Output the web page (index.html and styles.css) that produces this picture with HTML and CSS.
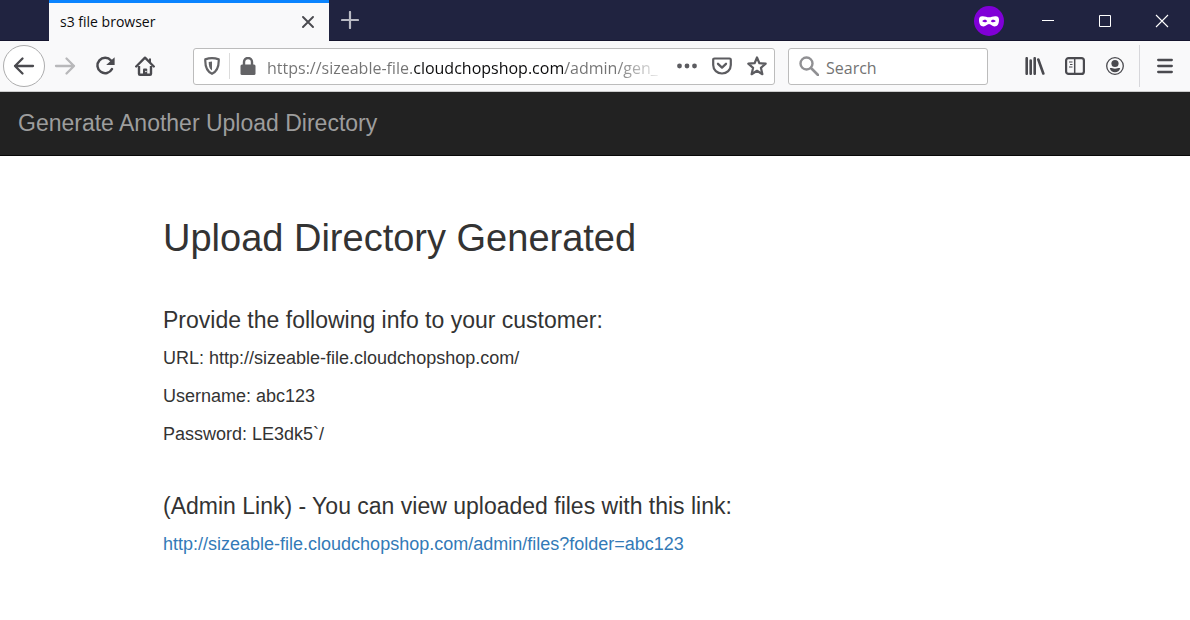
FILE: index.html
```html
<!DOCTYPE html>
<html lang="en">
<head>
<meta charset="utf-8">
<meta name="viewport" content="width=device-width, initial-scale=1">
<title>s3 file browser</title>
<link rel="stylesheet" href="styles.css">
</head>
<body>
<div class="tabstrip">
  <div class="tab">
    <span class="tab-title">s3 file browser</span>
    <button class="icon-btn tab-close" aria-label="Close tab"><svg width="12" height="12" viewBox="0 0 12 12"><path d="M1 1l10 10M11 1L1 11" stroke="#4a4a4f" stroke-width="1.9" stroke-linecap="round"/></svg></button>
  </div>
  <button class="icon-btn new-tab" aria-label="New tab"><svg width="18" height="18" viewBox="0 0 18 18"><path d="M9 1v16M1 9h16" stroke="#b9bac4" stroke-width="2.200" stroke-linecap="round"/></svg></button>
  <div class="window-controls">
    <svg class="private-badge" width="30" height="30" viewBox="0 0 30 30" role="img" aria-label="Private browsing"><circle cx="15" cy="15" r="15" fill="#8000d7"/><path fill="#fff" fill-rule="evenodd" d="M8.2 10.2C10.5 9.9 13 11.3 15 11.3s4.500-1.400 6.800-1.100C24.200 10.300 25 11.800 25 13.800 25 18 23.500 20.500 20.500 20.500c-2.500 0-3.300-2.400-5.500-2.400s-3 2.400-5.500 2.400C6.500 20.500 5 18 5 13.800c0-2 .800-3.500 3.200-3.600zM11 13.800c-1.300 0-2.200.6-2.700 1.400.8.700 1.600 1.100 2.700 1.100s1.800-.5 2.200-1c-.4-.9-1.100-1.500-2.200-1.500zm8 0c-1.100 0-1.800.6-2.200 1.500.4.500 1.100 1 2.200 1s1.900-.4 2.700-1.100c-.5-.8-1.400-1.400-2.700-1.400z"/></svg>
    <button class="icon-btn window-btn" aria-label="Minimize"><svg width="12" height="12" viewBox="0 0 12 12"><path d="M0 5.500h12" stroke="#fff"/></svg></button>
    <button class="icon-btn window-btn" aria-label="Maximize"><svg width="12" height="12" viewBox="0 0 12 12"><path d="M.5.500h11v11H.500z" fill="none" stroke="#fff"/></svg></button>
    <button class="icon-btn window-btn" aria-label="Close"><svg width="14" height="14" viewBox="0 0 14 14"><path d="M1 1l12 12M13 1L1 13" stroke="#fff" stroke-width="1.100"/></svg></button>
  </div>
</div>

<div class="toolbar">
  <div class="nav-buttons">
    <button class="icon-btn back" aria-label="Back"><svg width="22" height="20" viewBox="0 0 22 20"><path d="M20 10H2M9.500 2.500L2 10l7.500 7.500" fill="none" stroke="#4a4a4f" stroke-width="2.300" stroke-linecap="round" stroke-linejoin="round"/></svg></button>
    <button class="icon-btn tool" aria-label="Forward" disabled><svg width="22" height="20" viewBox="0 0 22 20"><path d="M2 10h18M12.500 2.500L20 10l-7.500 7.500" fill="none" stroke="#b8b8ba" stroke-width="2.300" stroke-linecap="round" stroke-linejoin="round"/></svg></button>
    <button class="icon-btn tool" aria-label="Reload"><svg width="20" height="20" viewBox="0 0 20 20"><path d="M16 4.500A7.700 7.700 0 1 0 17 13" fill="none" stroke="#4a4a4f" stroke-width="2.500" stroke-linecap="round"/><path d="M19.600 1.200v7.800h-8.400z" fill="#4a4a4f"/></svg></button>
    <button class="icon-btn tool" aria-label="Home"><svg width="20" height="20" viewBox="0 0 20 20"><path d="M1.200 10.500L10 1.600l8.800 8.900" fill="none" stroke="#4a4a4f" stroke-width="2.300" stroke-linecap="round" stroke-linejoin="round"/><path d="M4 10v7.700q0 1 1 1h10q1 0 1-1V10" fill="none" stroke="#4a4a4f" stroke-width="2.400"/><path d="M8 19v-5.500q0-1 1-1h2.200q1 0 1 1V19z" fill="#4a4a4f"/><circle cx="10.900" cy="15.500" r=".8" fill="#f9f9fa"/><path d="M15 2.500v4" stroke="#4a4a4f" stroke-width="2"/></svg></button>
  </div>

  <div class="field address">
    <button class="icon-btn shield" aria-label="Tracking protection"><svg width="16" height="18" viewBox="0 0 16 18"><path d="M8 1.200c2.200 0 4.500.4 6.700 1.200.3 7-1.200 11.800-6.700 14.400C2.500 14.200 1 9.400 1.300 2.400 3.500 1.600 5.800 1.200 8 1.200z" fill="none" stroke="#636366" stroke-width="2.200" stroke-linejoin="round"/><path d="M8 4.500v9C5.300 11.700 4.700 8.500 4.700 5z" fill="#636366"/></svg></button>
    <span class="field-divider"></span>
    <button class="icon-btn lock" aria-label="Site security"><svg width="16" height="18" viewBox="0 0 16 18"><rect x=".5" y="7.500" width="15" height="10.500" rx="1.500" fill="#636366"/><path d="M4 8V5a4 4 0 0 1 8 0v3" fill="none" stroke="#636366" stroke-width="2.400"/></svg></button>
    <input class="url" type="text" aria-label="Address" value="https://sizeable-file.cloudchopshop.com/admin/gen_">
    <button class="icon-btn action" aria-label="Page actions"><svg width="20" height="6" viewBox="0 0 20 6"><circle cx="2.500" cy="3" r="2.400" fill="#5c5c60"/><circle cx="10" cy="3" r="2.400" fill="#5c5c60"/><circle cx="17.500" cy="3" r="2.400" fill="#5c5c60"/></svg></button>
    <button class="icon-btn action" aria-label="Save to Pocket"><svg width="20" height="18" viewBox="0 0 20 18"><path d="M2.500 1.500h15q1.300 0 1.300 1.300V8c0 5-4 8.500-8.800 8.500S1.200 13 1.200 8V2.800q0-1.300 1.300-1.300z" fill="none" stroke="#5c5c60" stroke-width="2.200"/><path d="M6 6.800l4 3.800 4-3.800" fill="none" stroke="#5c5c60" stroke-width="2.300" stroke-linecap="round" stroke-linejoin="round"/></svg></button>
    <button class="icon-btn action" aria-label="Bookmark"><svg width="20" height="20" viewBox="0 0 20 20"><path d="M10 1.500l2.400 5.700 6.300.5-4.800 4.100 1.500 6.400L10 14.800l-5.400 3.400 1.500-6.400-4.800-4.100 6.300-.5z" fill="none" stroke="#5c5c60" stroke-width="2.200" stroke-linejoin="round"/></svg></button>
  </div>

  <label class="field search">
    <svg width="20" height="20" viewBox="0 0 20 20" aria-hidden="true"><circle cx="7.500" cy="7.500" r="6" fill="none" stroke="#909093" stroke-width="2.400"/><path d="M12 12l7 7" stroke="#909093" stroke-width="2.600" stroke-linecap="round"/></svg>
    <input class="search-input" type="search" placeholder="Search" aria-label="Search">
  </label>

  <div class="tools">
    <button class="icon-btn tool" aria-label="Library"><svg width="20" height="18" viewBox="0 0 20 18"><path d="M1.700 1.200v15.600M5.700 3.500v13.300M9.700 1.200v15.600M13.300 2.500l5 14" stroke="#4a4a4f" stroke-width="2.600" stroke-linecap="round"/></svg></button>
    <button class="icon-btn tool" aria-label="Sidebars"><svg width="20" height="18" viewBox="0 0 20 18"><rect x="1.100" y="1.100" width="17.800" height="15.800" rx="2.500" fill="none" stroke="#4a4a4f" stroke-width="2.200"/><path d="M9.700 2v14" stroke="#4a4a4f" stroke-width="1.500"/><path d="M4 5h3.500M5 7.500h2.500M4 10h3.500" stroke="#4a4a4f" stroke-width="1.200"/></svg></button>
    <button class="icon-btn tool" aria-label="Account"><svg width="18" height="18" viewBox="0 0 18 18"><circle cx="9" cy="9" r="8.300" fill="none" stroke="#4a4a4f" stroke-width="1.300"/><circle cx="9" cy="6.500" r="3.600" fill="#4a4a4f"/><path d="M3.800 11.200c1.700-.5 2.700.5 5.200.5s3.500-1 5.200-.5c-.7 2.700-2.600 4-5.200 4s-4.500-1.300-5.200-4z" fill="#4a4a4f"/></svg></button>
    <button class="icon-btn menu" aria-label="Open menu"><svg width="16" height="16" viewBox="0 0 16 16"><path d="M1.200 2h13.600M1.200 8h13.600M1.200 14h13.600" stroke="#4a4a4f" stroke-width="2.300" stroke-linecap="round"/></svg></button>
  </div>
</div>

<nav class="navbar"><a class="brand" href="#">Generate Another Upload Directory</a></nav>

<main class="content">
  <h1 class="title">Upload Directory Generated</h1>
  <section class="group">
    <h2 class="heading">Provide the following info to your customer:</h2>
    <p class="line">URL: http://sizeable-file.cloudchopshop.com/</p>
    <p class="line">Username: abc123</p>
    <p class="line">Password: LE3dk5`/</p>
  </section>
  <section class="group">
    <h2 class="heading">(Admin Link) - You can view uploaded files with this link:</h2>
    <p class="line"><a class="link" href="#">http://sizeable-file.cloudchopshop.com/admin/files?folder=abc123</a></p>
  </section>
</main>
</body>
</html>
```
FILE: styles.css
```css
* { box-sizing: border-box; }

body {
  margin: 0;
  background: #fff;
  color: #333;
  font-family: "Liberation Sans", Arial, sans-serif;
}

.icon-btn {
  display: flex;
  align-items: center;
  justify-content: center;
  flex: none;
  padding: 0;
  border: 0;
  background: none;
}

.icon-btn svg { display: block; }

/* Tab strip */
.tabstrip {
  display: flex;
  height: 41px;
  padding-left: 49px;
  background: #202340;
  box-shadow: inset 0 -1px #15152e;
}

.tab {
  display: flex;
  align-items: center;
  justify-content: space-between;
  width: 280px;
  padding: 0 12px 0 11px;
  border-top: 3px solid #0a84ff;
  background: #f9f9fa;
}

.tab-title {
  color: #0c0c0d;
  font: 14px/20px "Open Sans", sans-serif;
}

.tab-close { width: 18px; height: 36px; }
.new-tab { width: 42px; height: 40px; }

.window-controls {
  display: flex;
  align-items: center;
  height: 41px;
  margin-left: auto;
}

.private-badge { margin-right: 15px; }
.window-btn { width: 57px; height: 40px; }

/* Toolbar */
.toolbar {
  display: flex;
  align-items: center;
  height: 51px;
  padding-left: 3px;
  border-bottom: 1px solid #ccc;
  background: #f9f9fa;
}

.nav-buttons { display: flex; align-items: center; margin-right: 28px; }

.back {
  width: 42px;
  height: 42px;
  border: 1px solid #adadae;
  border-radius: 50%;
  background: #fff;
}

.tool { width: 40px; height: 40px; }

.field {
  display: flex;
  align-items: center;
  height: 37px;
  border: 1px solid #bcbcbc;
  border-radius: 3px;
  background: #fff;
  font: 16px/24px "Open Sans", sans-serif;
}

.address { flex: 1; min-width: 0; }
.shield { width: 35px; height: 35px; }
.field-divider { width: 1px; height: 26px; background: #dcdcdc; }
.lock { width: 35px; height: 35px; }

/* The host name is darker than the rest, and the end fades out. */
.url {
  flex: 1;
  min-width: 0;
  height: 35px;
  margin-right: 4px;
  padding: 4px 0 0 2px;
  border: 0;
  background: linear-gradient(90deg, #737373 149px, #0c0c0d 149px, #0c0c0d 300px, #737373 300px, #737373 calc(100% - 50px), transparent);
  background-clip: text;
  -webkit-background-clip: text;
  color: transparent;
  font: inherit;
}

.action { width: 35px; height: 35px; }

.search {
  width: 200px;
  margin-left: 13px;
  padding: 0 10px;
  gap: 7px;
}

.search-input {
  flex: 1;
  min-width: 0;
  padding: 4px 0 0;
  border: 0;
  background: none;
  color: #0c0c0d;
  font: inherit;
}

.search-input::placeholder { color: #737373; opacity: 1; }

.tools { display: flex; align-items: center; margin-left: 27px; }

.menu {
  width: 51px;
  height: 42px;
  margin-left: 4px;
  border-left: 1px solid #d7d7db;
}

/* Page */
.navbar {
  padding: 16px 18px 17px;
  border-bottom: 1px solid #080808;
  background: #222;
}

.brand {
  display: block;
  color: #9d9d9d;
  font-size: 23px;
  line-height: 30px;
  text-decoration: none;
}

.content {
  max-width: 900px;
  margin: 0 auto;
  padding: 60px 18px;
}

.title {
  margin: 0;
  font-size: 38px;
  font-weight: 400;
  line-height: 44px;
}

.group { margin-top: 45px; }

.heading {
  margin: 0 0 11px;
  font-size: 23px;
  font-weight: 400;
  line-height: 30px;
}

.line {
  margin: 0 0 14px;
  font-size: 18px;
  line-height: 24px;
}

.link { color: #337ab7; text-decoration: none; }
```
